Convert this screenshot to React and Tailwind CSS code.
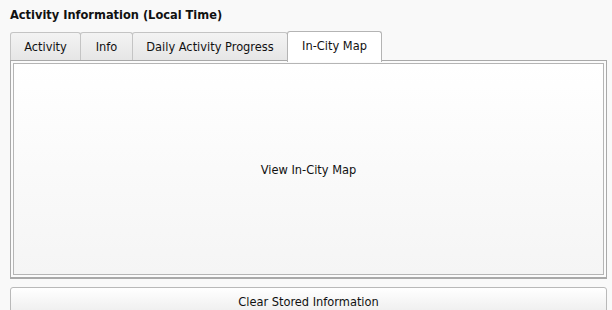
export default function App() {
  const tabs = [
    { label: 'Activity', w: 'w-[71px]' },
    { label: 'Info', w: 'w-[53px]' },
    { label: 'Daily Activity Progress', w: 'w-[156px]' },
  ]

  return (
    <div
      className="w-[612px] h-[310px] overflow-hidden bg-[#f9f9f9] pl-[10px] pr-[5px] text-[#111]"
      style={{ fontFamily: 'Tahoma, "DejaVu Sans Condensed", "DejaVu Sans", sans-serif' }}
    >
      <div className="h-[29px] pt-[7px] text-[12.7px] font-bold leading-[16px]">
        Activity Information (Local Time)
      </div>

      {/* tab strip */}
      <div className="flex items-end h-[31px]">
        {tabs.map((t) => (
          <div
            key={t.label}
            className={`${t.w} h-[28px] flex items-center justify-center border border-b-0 border-[#c4c4c4] -ml-px first:ml-0 rounded-t-[3px] bg-gradient-to-b from-[#f3f3f3] to-[#e6e6e6] text-[12.7px]`}
          >
            {t.label}
          </div>
        ))}
        <div className="relative z-10 w-[95px] h-[31px] -mb-[2px] -ml-px flex items-center justify-center border border-b-0 border-[#b4b4b4] rounded-t-[3px] bg-white text-[12.7px] pb-[2px]">
          In-City Map
        </div>
      </div>

      {/* panel */}
      <div className="h-[219px] border border-[#a9a9a9] border-b-2 p-[2px] bg-[#fbfbfb]">
        <div className="h-full pt-[2px] border border-[#b5b5b5] bg-gradient-to-b from-white to-[#f5f5f5] flex items-center justify-center text-[12.7px]">
          View In-City Map
        </div>
      </div>

      <button className="mt-[8px] w-full h-[30px] border border-[#b9b9b9] rounded-t-[3px] bg-gradient-to-b from-white to-[#ececec] flex items-center justify-center text-[12.7px]">
        Clear Stored Information
      </button>
    </div>
  )
}
